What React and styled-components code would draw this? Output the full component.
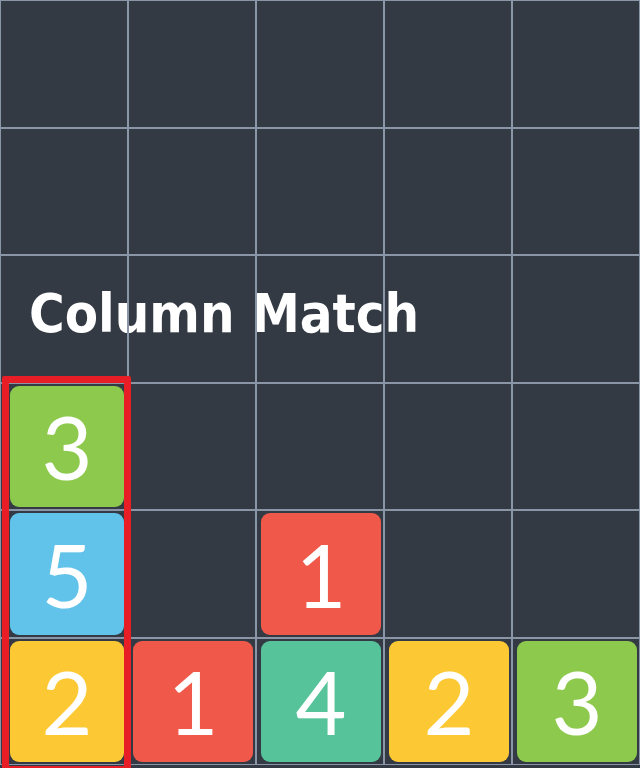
import React from 'react';
import styled, { createGlobalStyle } from 'styled-components';

const CELL_W = 128;
const CELL_H = 127.5;
const COLS = 5;
const ROWS = 6;

const GlobalStyle = createGlobalStyle`
    html, body {
        margin: 0;
        padding: 0;
        background: #343a44;
        overflow: hidden;
    }
`;

const Board = styled.div`
    display: grid;
    grid-template-columns: repeat(${COLS}, ${CELL_W}px);
    grid-template-rows: repeat(${ROWS}, ${CELL_H}px);
    width: ${CELL_W * COLS}px;
    height: 768px;
    background: #343a44;
    overflow: hidden;
`;

// grid lines sit above the title text but below the tiles
const Cell = styled.div`
    grid-column: ${({ $col }) => $col + 1};
    grid-row: ${({ $row }) => $row + 1};
    z-index: 1;
    box-shadow: inset -1px -1px 0 #8a95a8, inset 1px 1px 0 #8a95a8;
`;

const Title = styled.h1`
    grid-column: 1 / -1;
    grid-row: 3;
    z-index: 0;
    display: flex;
    align-items: center;
    margin: 0;
    padding: 0 0 10px 29px;
    font-family: "DejaVu Sans Condensed", "DejaVu Sans", Verdana, sans-serif;
    font-stretch: condensed;
    font-weight: bold;
    font-size: 54px;
    color: #ffffff;
    white-space: nowrap;
`;

const Tile = styled.div`
    grid-column: ${({ $col }) => $col + 1};
    grid-row: ${({ $row }) => $row + 1};
    z-index: 2;
    display: flex;
    align-items: center;
    justify-content: center;
    margin: ${({ $framed }) => ($framed ? '3px 4px 3px 10px' : '3px 3px 3px 5px')};
    border-radius: 9px;
    background: ${({ $color }) => $color};
    color: #ffffff;
    font-family: Lato, "Open Sans", sans-serif;
    font-size: 88px;
    line-height: 1;
`;

const Highlight = styled.div`
    grid-column: 1;
    grid-row: 4 / span 3;
    z-index: 3;
    margin: -7px -3px -8px 2px;
    border: 7px solid #e81e26;
    border-radius: 2px;
    pointer-events: none;
`;

const COLORS = {
    1: '#f0584a',
    2: '#fcc834',
    3: '#8cc94c',
    4: '#57c39a',
    5: '#62c3ea',
};

const tiles = [
    { row: 3, col: 0, value: 3 },
    { row: 4, col: 0, value: 5 },
    { row: 4, col: 2, value: 1 },
    { row: 5, col: 0, value: 2 },
    { row: 5, col: 1, value: 1 },
    { row: 5, col: 2, value: 4 },
    { row: 5, col: 3, value: 2 },
    { row: 5, col: 4, value: 3 },
];

const matchColumn = 0;

export default function App() {
    const cells = [];
    for (let r = 0; r < ROWS; r++) {
        for (let c = 0; c < COLS; c++) {
            cells.push(<Cell key={`${r}-${c}`} $row={r} $col={c} />);
        }
    }

    return (
        <>
            <GlobalStyle />
            <Board>
                <Title>Column Match</Title>
                {cells}
                {tiles.map((t) => (
                    <Tile
                        key={`${t.row}-${t.col}`}
                        $row={t.row}
                        $col={t.col}
                        $color={COLORS[t.value]}
                        $framed={t.col === matchColumn}
                    >
                        {t.value}
                    </Tile>
                ))}
                <Highlight />
            </Board>
        </>
    );
}
